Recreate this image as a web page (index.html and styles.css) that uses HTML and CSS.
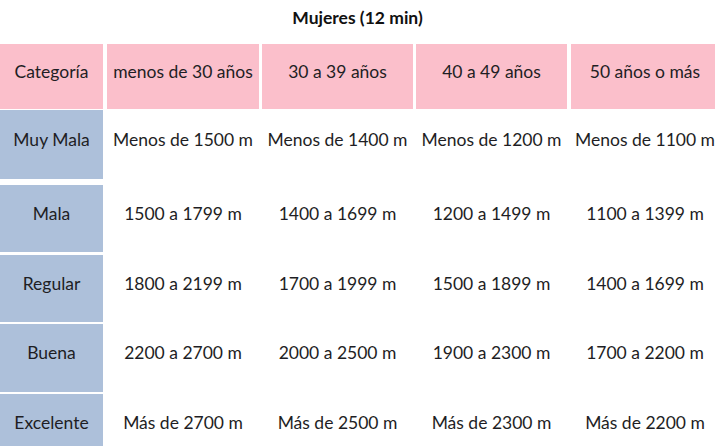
FILE: index.html
```html
<!DOCTYPE html>
<html lang="es">
<head>
<meta charset="utf-8">
<title>Mujeres (12 min)</title>
<link rel="stylesheet" href="styles.css">
</head>
<body>
<div class="page">
  <h1 class="title">Mujeres (12 min)</h1>
  <div class="table">
    <div class="row head">
      <div class="cell">Categoría</div>
      <div class="cell">menos de 30 años</div>
      <div class="cell">30 a 39 años</div>
      <div class="cell">40 a 49 años</div>
      <div class="cell">50 años o más</div>
    </div>
    <div class="row r1">
      <div class="cell cat">Muy Mala</div>
      <div class="cell">Menos de 1500 m</div>
      <div class="cell">Menos de 1400 m</div>
      <div class="cell">Menos de 1200 m</div>
      <div class="cell">Menos de 1100 m</div>
    </div>
    <div class="row r2">
      <div class="cell cat">Mala</div>
      <div class="cell">1500 a 1799 m</div>
      <div class="cell">1400 a 1699 m</div>
      <div class="cell">1200 a 1499 m</div>
      <div class="cell">1100 a 1399 m</div>
    </div>
    <div class="row r3">
      <div class="cell cat">Regular</div>
      <div class="cell">1800 a 2199 m</div>
      <div class="cell">1700 a 1999 m</div>
      <div class="cell">1500 a 1899 m</div>
      <div class="cell">1400 a 1699 m</div>
    </div>
    <div class="row r4">
      <div class="cell cat">Buena</div>
      <div class="cell">2200 a 2700 m</div>
      <div class="cell">2000 a 2500 m</div>
      <div class="cell">1900 a 2300 m</div>
      <div class="cell">1700 a 2200 m</div>
    </div>
    <div class="row r5">
      <div class="cell cat">Excelente</div>
      <div class="cell">Más de 2700 m</div>
      <div class="cell">Más de 2500 m</div>
      <div class="cell">Más de 2300 m</div>
      <div class="cell">Más de 2200 m</div>
    </div>
  </div>
</div>
</body>
</html>
```
FILE: styles.css
```css
* { box-sizing: border-box; }
html, body {
  margin: 0;
  padding: 0;
  background: #ffffff;
  overflow: hidden;
}
.page {
  width: 715px;
  height: 446px;
  font-family: Lato, "Open Sans", sans-serif;
  color: #1e1e24;
}
.title {
  margin: 0;
  height: 44px;
  padding-top: 6px;
  text-align: center;
  font-size: 17.5px;
  font-weight: 700;
  line-height: 24px;
  color: #111;
}
.table {
  display: flex;
  flex-direction: column;
}
.row {
  display: grid;
  grid-template-columns: 103px 4px 152px 3px 151px 3px 151px 4px 148px;
  height: 68px;
}
.row > .cell:nth-child(1) { grid-column: 1; }
.row > .cell:nth-child(2) { grid-column: 3; }
.row > .cell:nth-child(3) { grid-column: 5; }
.row > .cell:nth-child(4) { grid-column: 7; }
.row > .cell:nth-child(5) { grid-column: 9; }
.cell {
  display: flex;
  align-items: center;
  justify-content: center;
  padding-bottom: 10px;
  font-size: 17.5px;
  white-space: nowrap;
  line-height: 20px;
}
.head { height: 65px; }
.head .cell { background: #fbbfcb; }
.cat { background: #adc0da; }
.r1 { margin-top: 1px; height: 69px; }
.r2 { margin-top: 6px; height: 67px; }
.r3 { margin-top: 3px; height: 67px; }
.r4 { margin-top: 2px; height: 68px; }
.r5 { margin-top: 2px; height: 68px; }
```
